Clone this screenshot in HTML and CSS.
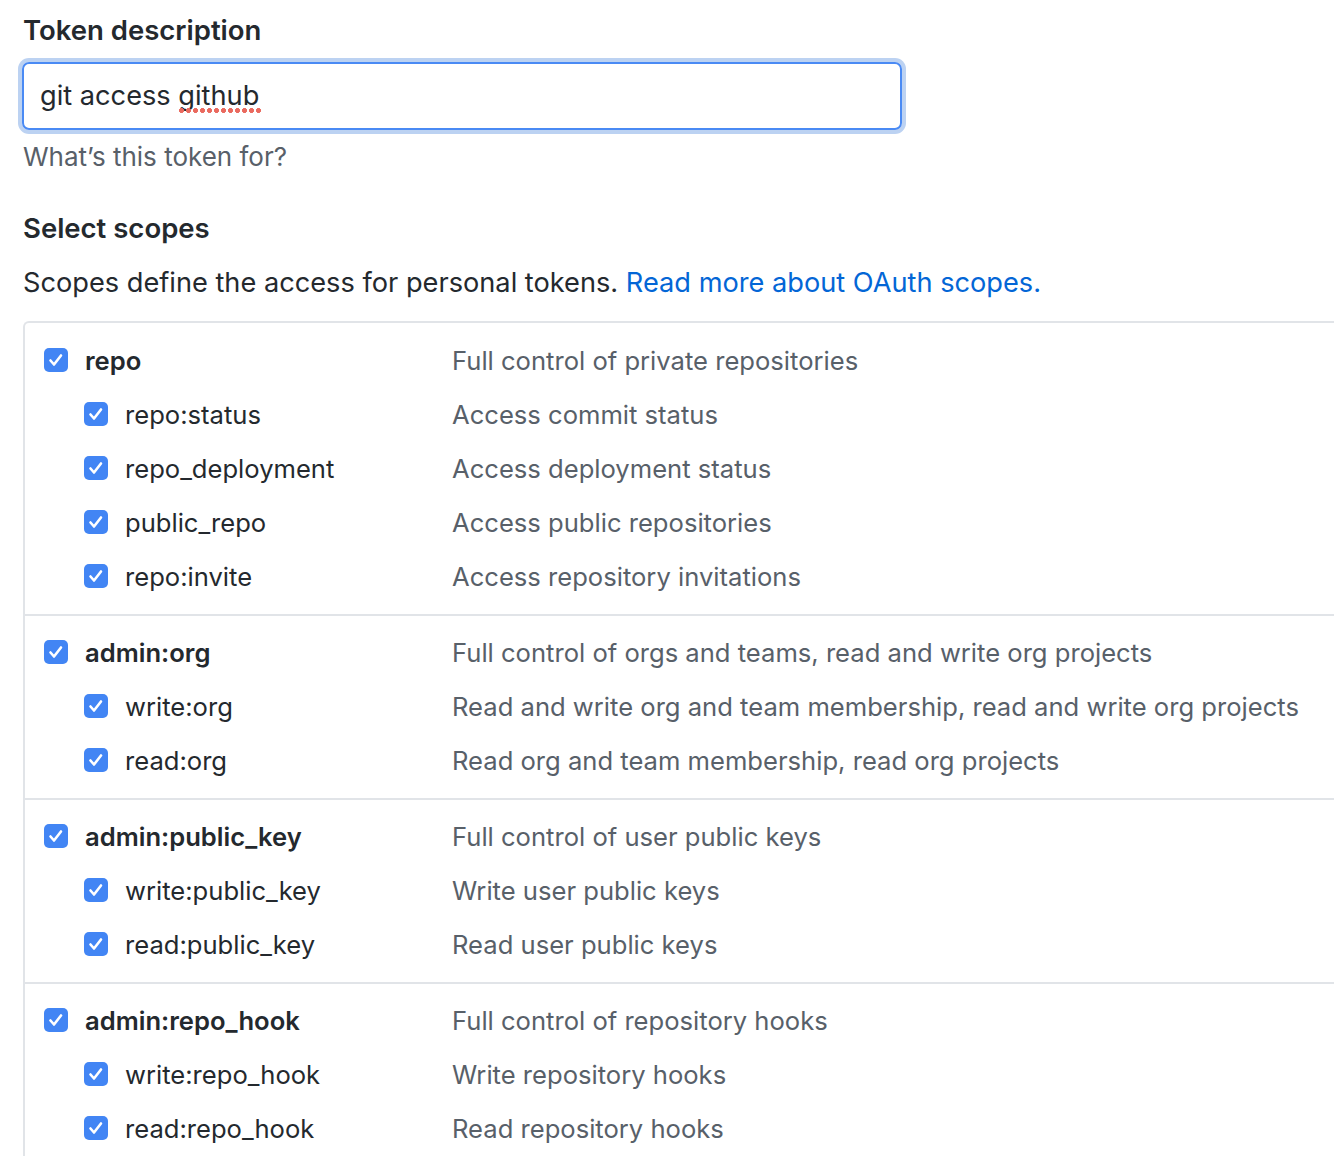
FILE: index.html
```html
<!DOCTYPE html>
<html>
<head>
<meta charset="utf-8">
<link rel="stylesheet" href="styles.css">
</head>
<body>
<div class="page">
  <div class="field">
    <div class="label">Token description</div>
    <div class="input">git access <span class="spell">github</span></div>
    <div class="note">What’s this token for?</div>
  </div>
  <div class="label scopes-title">Select scopes</div>
  <p class="intro">Scopes define the access for personal tokens. <a href="#">Read more about OAuth scopes.</a></p>
  <div class="box">
    <div class="group">
      <div class="row parent"><span class="cb"></span><span class="name">repo</span><span class="desc">Full control of private repositories</span></div>
      <div class="row child"><span class="cb"></span><span class="name">repo:status</span><span class="desc">Access commit status</span></div>
      <div class="row child"><span class="cb"></span><span class="name">repo_deployment</span><span class="desc">Access deployment status</span></div>
      <div class="row child"><span class="cb"></span><span class="name">public_repo</span><span class="desc">Access public repositories</span></div>
      <div class="row child"><span class="cb"></span><span class="name">repo:invite</span><span class="desc">Access repository invitations</span></div>
    </div>
    <div class="group">
      <div class="row parent"><span class="cb"></span><span class="name">admin:org</span><span class="desc">Full control of orgs and teams, read and write org projects</span></div>
      <div class="row child"><span class="cb"></span><span class="name">write:org</span><span class="desc">Read and write org and team membership, read and write org projects</span></div>
      <div class="row child"><span class="cb"></span><span class="name">read:org</span><span class="desc">Read org and team membership, read org projects</span></div>
    </div>
    <div class="group">
      <div class="row parent"><span class="cb"></span><span class="name">admin:public_key</span><span class="desc">Full control of user public keys</span></div>
      <div class="row child"><span class="cb"></span><span class="name">write:public_key</span><span class="desc">Write user public keys</span></div>
      <div class="row child"><span class="cb"></span><span class="name">read:public_key</span><span class="desc">Read user public keys</span></div>
    </div>
    <div class="group">
      <div class="row parent"><span class="cb"></span><span class="name">admin:repo_hook</span><span class="desc">Full control of repository hooks</span></div>
      <div class="row child"><span class="cb"></span><span class="name">write:repo_hook</span><span class="desc">Write repository hooks</span></div>
      <div class="row child"><span class="cb"></span><span class="name">read:repo_hook</span><span class="desc">Read repository hooks</span></div>
    </div>
  </div>
</div>
</body>
</html>
```
FILE: styles.css
```css
html, body {
  margin: 0;
  padding: 0;
  background: #fff;
}
body {
  font-family: Inter, "Noto Sans", sans-serif;
  font-size: 26px;
  color: #24292e;
  overflow: hidden;
  height: 1156px;
}
.page {
  padding: 12px 0 0 23px;
}
.label {
  font-weight: 600;
  font-size: 27.5px;
  line-height: 36px;
}
.input {
  box-sizing: border-box;
  width: 880px;
  height: 68px;
  margin: 14px 0 0 -1px;
  border: 2px solid #4a8af4;
  border-radius: 7px;
  box-shadow: 0 0 0 4px #bcd2f2;
  padding: 0 0 0 16px;
  line-height: 64px;
  font-size: 27.2px;
  color: #24292e;
}
.spell {
  position: relative;
}
.spell::after {
  content: "";
  position: absolute;
  left: 0;
  right: -2px;
  bottom: -1px;
  height: 5px;
  background: radial-gradient(circle at 3.5px 2.5px, #ea6a5f 2.2px, transparent 2.8px) repeat-x;
  background-size: 7px 5px;
}
.note {
  color: #586069;
  margin-top: 9px;
  line-height: 36px;
}
.scopes-title {
  margin-top: 35px;
}
.intro {
  margin: 19px 0 0 0;
  line-height: 36px;
  font-size: 27.2px;
}
.intro a {
  color: #0366d6;
  text-decoration: none;
}
.box {
  margin-top: 20px;
  border: 2px solid #e1e4e8;
  border-right: 0;
  border-radius: 6px 0 0 6px;
  font-size: 25.6px;
}
.group {
  padding: 9px 0 11px 0;
  border-top: 2px solid #e1e4e8;
}
.group:first-child {
  border-top: 0;
  padding-top: 10px;
}
.row {
  display: flex;
  align-items: center;
  height: 54px;
}
.cb {
  flex: none;
  width: 24px;
  height: 24px;
  border-radius: 5px;
  background: #4285f4 url("data:image/svg+xml;utf8,<svg xmlns='http://www.w3.org/2000/svg' viewBox='0 0 24 24'><path d='M6.5 12.5l3.5 4 7-9' fill='none' stroke='white' stroke-width='2.6' stroke-linecap='round' stroke-linejoin='round'/></svg>") center/100% no-repeat;
}
.parent .cb {
  margin-left: 19px;
}
.child .cb {
  margin-left: 59px;
}
.name {
  margin-left: 17px;
}
.parent .name {
  font-weight: 600;
  width: 367px;
}
.child .name {
  width: 327px;
}
.desc {
  color: #586069;
}
```
